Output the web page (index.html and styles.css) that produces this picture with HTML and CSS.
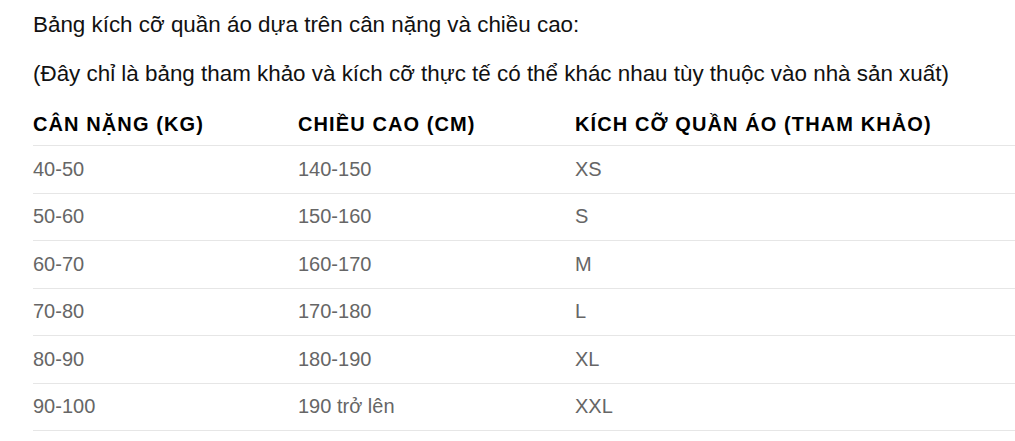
FILE: index.html
```html
<!DOCTYPE html>
<html lang="vi">
<head>
<meta charset="utf-8">
<title>Bảng kích cỡ quần áo</title>
<link rel="stylesheet" href="styles.css">
</head>
<body>
<div class="page">
  <p class="intro">Bảng kích cỡ quần áo dựa trên cân nặng và chiều cao:</p>
  <p class="intro">(Đây chỉ là bảng tham khảo và kích cỡ thực tế có thể khác nhau tùy thuộc vào nhà sản xuất)</p>
  <table class="size-table">
    <thead>
      <tr>
        <th class="c1">Cân nặng (kg)</th>
        <th class="c2">Chiều cao (cm)</th>
        <th class="c3">Kích cỡ quần áo (tham khảo)</th>
      </tr>
    </thead>
    <tbody>
      <tr><td>40-50</td><td>140-150</td><td>XS</td></tr>
      <tr><td>50-60</td><td>150-160</td><td>S</td></tr>
      <tr><td>60-70</td><td>160-170</td><td>M</td></tr>
      <tr><td>70-80</td><td>170-180</td><td>L</td></tr>
      <tr><td>80-90</td><td>180-190</td><td>XL</td></tr>
      <tr><td>90-100</td><td>190 trở lên</td><td>XXL</td></tr>
    </tbody>
  </table>
</div>
</body>
</html>
```

FILE: styles.css
```css
html, body {
  margin: 0;
  padding: 0;
  background: #ffffff;
  overflow: hidden;
}

.page {
  padding: 10px 0 0 33px;
  font-family: "Liberation Sans", Arial, sans-serif;
  font-size: 20px;
  color: #111111;
}

.intro {
  margin: 0;
  font-size: 22.4px;
  line-height: 30px;
}

.intro + .intro {
  margin-top: 18.5px;
}

.size-table {
  width: 982px;
  border-collapse: collapse;
  margin-top: 12.5px;
  table-layout: fixed;
}

.size-table th {
  text-align: left;
  text-transform: uppercase;
  font-weight: bold;
  font-size: 20px;
  letter-spacing: 1.1px;
  line-height: 23px;
  color: #000000;
  padding: 12px 0 9px 0;
}

.size-table .c1 { width: 265px; }
.size-table .c2 { width: 277px; }

.size-table td {
  line-height: 23px;
  padding: 11.75px 0;
  color: #666666;
  border-top: 1px solid #e6e6e6;
}

.size-table tbody tr:last-child td {
  border-bottom: 1px solid #e6e6e6;
}
```
